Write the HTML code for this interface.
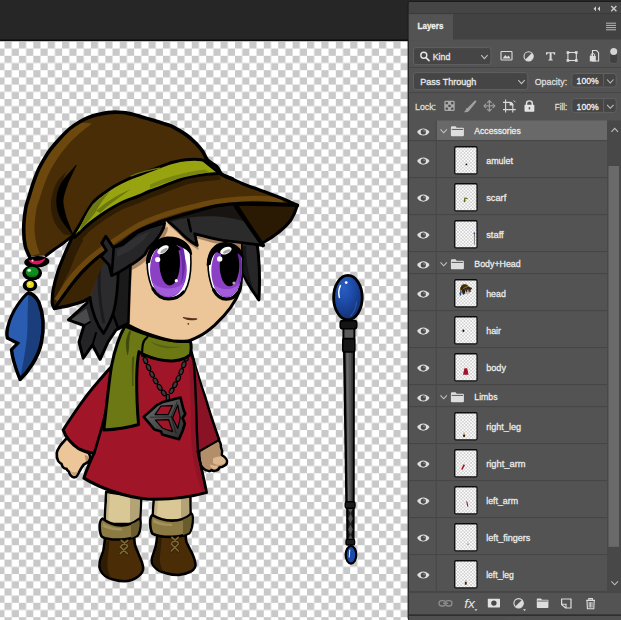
<!DOCTYPE html>
<html><head><meta charset="utf-8"><title>Layers</title>
<style>
html,body{margin:0;padding:0;background:#262626;overflow:hidden}
svg{display:block}
text{font-family:"Liberation Sans",sans-serif;}
</style></head><body>
<svg width="621" height="620" viewBox="0 0 621 620">
<defs>
<pattern id="chk" x="4.5" y="41.4" width="14.405" height="14.395" patternUnits="userSpaceOnUse">
<rect width="14.405" height="14.395" fill="#ffffff"/>
<rect x="0" y="0" width="7.2025" height="7.1975" fill="#c9c9c9"/>
<rect x="7.2025" y="7.1975" width="7.2025" height="7.1975" fill="#c9c9c9"/>
</pattern>
<pattern id="tchk" x="455.4" y="147" width="3.3" height="3.3" patternUnits="userSpaceOnUse">
<rect width="3.3" height="3.3" fill="#ffffff"/>
<rect x="0" y="0" width="1.65" height="1.65" fill="#d0d0d0"/>
<rect x="1.65" y="1.65" width="1.65" height="1.65" fill="#d0d0d0"/>
</pattern>
<g id="eye">
<path d="M-6.2 0 C-3.6 -4.7 3.6 -4.7 6.2 0 C3.6 4.7 -3.6 4.7 -6.2 0Z" fill="#e0e0e0"/>
<circle cx="0" cy="0" r="2.6" fill="#4a4a4a"/>
<circle cx="0.8" cy="-0.8" r="1" fill="#7e7e7e"/>
</g>
<g id="folder">
<path d="M0 1.2 Q0 0 1.2 0 H4.6 L5.8 1.6 H12 Q13 1.6 13 2.6 V9 Q13 10 12 10 H1 Q0 10 0 9Z" fill="#dedede"/>
<rect x="0.8" y="2.7" width="11.4" height="1" fill="#5a5a5a"/>
</g>
<path id="chev" d="M-3.2 -1.8 L0 1.7 L3.2 -1.8" fill="none" stroke="#c4c4c4" stroke-width="1.05"/>
</defs>
<!-- app background -->
<rect width="621" height="620" fill="#262626"/>
<rect x="0" y="39.5" width="410" height="1.8" fill="#0a0a0a"/>
<!-- canvas -->
<rect x="0" y="41.2" width="410" height="580" fill="url(#chk)"/>
<g id="character">
<g stroke-linejoin="round" stroke-linecap="round">
<!-- ===== FEATHER ===== -->
<g id="feather">
<path d="M28.4 292.9 C22 298 12 312 8.5 325 C6.5 331 6.8 335 7.5 338 L18 343.2 L11.6 349.7 C12 356 14 364 20.1 379.4 C28 372 38 358 41.3 343 C44.5 328 43.5 314 38.7 302 C36 297 32 293.5 28.4 292.9Z" fill="#1a3e7c" stroke="#000" stroke-width="3.6"/>
<path d="M28.4 294.5 C22 300 13.5 312 10 325 C8.4 331 8.6 335 9 337 L20.5 342.8 L13.4 350 C14 356 16 364 20.5 376 C24 360 27.5 340 27.5 325 C27.6 312 28 300 28.4 294.5Z" fill="#2a5cb2"/>
</g>
<!-- ===== LEGS / BOOTS ===== -->
<g id="legs" stroke="#000" stroke-width="2.6">
<path d="M106.2 492 L141.2 497 L140 524 L104.6 524Z" fill="#d9c896"/>
<path d="M153.8 499 L190.3 496 L190.6 521 L152.5 521Z" fill="#d9c896"/>
<path d="M130 496 L140.2 497.5 L139 523 L130 523Z" fill="#b3a377" stroke="none"/>
<path d="M181 498 L189.2 497 L189.4 520 L181 520Z" fill="#b3a377" stroke="none"/>
<path d="M107.4 493.5 L110 494 L108 523 L105.8 523Z" fill="#c3b285" stroke="none"/>
<path d="M155 500 L158 499.6 L156.6 520 L153.8 520Z" fill="#c3b285" stroke="none"/>
<!-- boots -->
<path d="M105 538 C104.6 543 104 547 103.3 551 C102 555 100.6 558 99.7 561.7 C99 565 99.4 568 100.6 570.5 C103 575.5 108 578.4 113 579.4 C117 580.6 121 581.2 125.4 581.2 C130 580.8 134.5 579.4 137.8 576.7 C141.6 574 143.6 570.6 143.1 567 C142.6 563 141 559.6 139.6 556.4 C138 552.6 136.4 549 135.2 545.7 C134.6 543 134.3 540.4 134.3 537.8Z" fill="#4a2d06"/>
<path d="M157.3 535 C157 539.5 156.4 543.6 155.5 547.5 C154.4 551 153 554.6 152 558.1 C151.4 561 152 564 153.8 566.1 C157 570 161.6 572.2 166.2 573.2 C170 574.4 174.4 575 178.6 575 C183 574.6 187.6 573.4 191 571.4 C194.4 569.4 195.9 566.6 195.4 563.5 C194.8 559.6 193.4 556 191.9 552.8 C190 549 188 545.6 186.5 542.2 C185.9 539.8 185.7 537.4 185.7 535.1Z" fill="#4a2d06"/>
<!-- cuffs -->
<path d="M102.4 518.6 C100 520 99.4 525 99.7 528 C99.9 531.4 100.4 534.6 101.6 536.4 C104 538.4 112 539.6 120.1 539.5 C127 539.4 133 538 137.4 535.8 C139.6 533 140.6 527 140.5 522.7 C140.4 520.6 140 519.4 139.2 518.8 C134 523 127 525.4 121.9 525.4 C115 525.6 108 523 102.4 518.6Z" fill="#8b7a42"/>
<path d="M152.4 515 C150.4 516.6 150 521 150.2 524.4 C150.4 528 150.9 531.4 152.4 533.6 C156 535.8 164 537 171.5 536.9 C178 536.8 185 535.4 189.4 533 C191.8 530 192.8 522 192.7 517.4 C192.6 515.4 192.2 514.2 191.4 513.6 C186 518.6 178 520.6 172 520.6 C165 520.6 158 518.6 152.4 515Z" fill="#8b7a42"/>
</g>
<path d="M131 524 C134 523 137 521.4 139.3 520 C140 524 139.6 530 137 535 C135 536.4 133 537.4 131 538Z" fill="#6a5c2e"/>
<path d="M183 519.4 C186 518.4 189 516.6 191.4 515 C192 520 191.4 528 189 532.4 C187 533.6 185 534.6 183 535.2Z" fill="#6a5c2e"/>
<path d="M103.4 523 C108 526.4 115 528.4 122 528.2 L122 530.4 C114 530.6 107 529 102.6 526.4Z" fill="#a3935a"/>
<path d="M153.6 519 C159 522.4 166 524 172 523.8 L172 526 C165 526.2 158 524.8 153 522.4Z" fill="#a3935a"/>
<path d="M106.4 541 C105.8 545 105.2 548 104.4 551.4 C103 555.6 101.6 559 101 562 C100.4 565 100.8 568 102 570 C104 574 107.6 576.6 111.4 578 C107.6 572 106.8 565 107.6 558 C108.2 552 109 546 109.4 541Z" fill="#2e1c03"/>
<path d="M158.6 538 C158.2 542 157.6 545 156.8 548 C155.6 552 154.2 555.4 153.4 558.4 C152.8 561 153.2 563.4 154.6 565.4 C156.6 568.4 160 570.4 163.4 571.6 C160 566 159.4 560 160.2 554 C160.8 548 161.4 543 161.6 538Z" fill="#2e1c03"/>
<g stroke="#2e1c03" stroke-width="3" fill="none" stroke-linecap="round">
<path d="M120.2 546.6 L127.4 553.6 M127.4 546.6 L120.2 553.6 M121.4 540.6 L127.6 545.6 M127.6 540.6 L121.4 545.6"/>
<path d="M171.2 544 L178.4 551 M178.4 544 L171.2 551 M172 537.6 L178.2 542.6 M178.2 537.6 L172 542.6"/>
</g>
<g stroke="#7c6838" stroke-width="1.7" fill="none" stroke-linecap="round">
<path d="M120.2 546.6 L127.4 553.6 M127.4 546.6 L120.2 553.6 M121.4 540.6 L127.6 545.6 M127.6 540.6 L121.4 545.6"/>
<path d="M171.2 544 L178.4 551 M178.4 544 L171.2 551 M172 537.6 L178.2 542.6 M178.2 537.6 L172 542.6"/>
</g>
<!-- ===== HANDS ===== -->
<path d="M199.2 450.6 L218.8 440 C220.4 442.4 221.2 444.6 220.8 446.6 C222.2 449.4 222.4 452.4 221.8 455.1 C224.4 456.6 226.4 458.6 227 460.8 C227.2 463 226.4 464.6 225.1 465.3 C223.4 466.6 221.4 467.4 219.5 467.5 C218.8 469.4 217.6 470.4 216.1 470.5 C214.4 471.2 212.6 471 211.4 470 C210.4 471.2 209.2 471.4 208.2 470.9 C206.4 470.6 204.8 469.8 203.7 468.7 C201.4 467 200.2 464.6 199.9 461.9 C199.4 458 199.2 454 199.2 450.6Z" fill="#b38e6b" stroke="#000" stroke-width="2.4"/>
<path d="M213 458.4 C216 457 219 456.4 221.6 456.6 C224 458 225.4 459.6 225.6 461 C225.4 462.8 224.4 463.8 223 464.2 C220 465.4 216 465 213 463Z" fill="#dcb88e"/>
<path d="M209.6 464.6 C212 465.6 215 466 218 465.6 C217.4 467.8 216.4 468.8 215 469 C213 469.2 210.6 468 209.6 464.6Z" fill="#dcb88e"/>
<path d="M68 437 C63.5 441.6 61.4 444 59.7 446.5 C58 449 57 451 56.8 453.2 C56.6 456.4 57 459 58.2 461 C59.4 462.4 60.4 463.4 61.6 463.9 C61.8 465.4 62.2 466.4 63.1 467.3 C64 468.4 65.2 468.8 66.5 468.7 C67 470 67.8 471 68.9 471.6 C69.2 473.2 69.8 474.6 70.8 475.5 C71.8 476.8 73 477.4 74.2 477.4 C75.4 477.2 76.4 476.6 77.1 475.5 C78.4 473.4 79.8 471 81 468.7 C82 467 83 465.6 83.9 464.4 C85.4 463.6 87 462.8 88.2 461.9 C89.6 460.6 90.2 459 90.2 457.1 C90 455.6 89.4 454.2 88.7 453.2 L80 440Z" fill="#ecc698" stroke="#000" stroke-width="2.6"/>
<path d="M84.6 455 C86.6 455.4 88.2 456.4 88.8 457.6 C88.6 459.4 87.6 460.6 86 461.6 C85.6 459.6 85.2 457.4 84.6 455Z" fill="#b9906a"/>
<path d="M70.4 471 C72.4 472.4 75.4 472.6 78 471.4 C77.2 473.4 76.2 475 75.2 475.8 C73.6 476.2 71.8 475 70.4 471Z" fill="#c9a27a"/>
<!-- ===== TUNIC ===== -->
<g id="tunic">
<path d="M112 366 C104 375 92 388 82 402 C75 412 68 422 63.2 430 C65 436 71.5 444.2 79 448.9 C84 451.6 89 453 94 453.2 C90 462 86 471 83.9 478.1 C100 488 125 497 146.8 499 C168 500 190 497 206.5 492.6 C204 480 201 466 197.5 452 L218.8 439.3 C214 425.8 209 411 204.8 396.4 C200 383 196.5 371 193.5 360.3 L191.3 352 L150 345Z" fill="#a11528" stroke="#000" stroke-width="3"/>
<path d="M188 358 C190 376 191 400 191 430 C191.4 455 195.6 475 202 491.2 L205 491.5 C202 478 199 464 196.5 451.5 L196 420 L194 360Z" fill="#8e1326"/>
<path d="M193.5 358 C195 375 196 398 196.9 431.6 L197.6 451 L217.6 439.6 C213 425.8 208 411 203.8 396.4 C199.6 384 196.5 372 193.5 358Z" fill="#8a1225"/>
<path d="M193.5 359.3 C195 375 196 398 196.9 431.6 L198 451.9" fill="none" stroke="#000" stroke-width="2.4"/>
<path d="M109 398 C106 412 101 432 94.3 453" fill="none" stroke="#000" stroke-width="2.6"/>
</g>
<!-- ===== CHAIN + PENDANT ===== -->
<g id="chain" fill="#3b3b3b" stroke="#000" stroke-width="1.1">
<ellipse cx="143.5" cy="354" rx="2.2" ry="2.6"/>
<ellipse cx="145.5" cy="360.5" rx="2" ry="3.2" transform="rotate(-22 145.5 360.5)"/>
<ellipse cx="148.6" cy="367.5" rx="2" ry="3.2" transform="rotate(-24 148.6 367.5)"/>
<ellipse cx="152" cy="374.3" rx="2" ry="3.2" transform="rotate(-27 152 374.3)"/>
<ellipse cx="155.6" cy="381" rx="2" ry="3.2" transform="rotate(-30 155.6 381)"/>
<ellipse cx="159.6" cy="387.3" rx="2" ry="3.2" transform="rotate(-33 159.6 387.3)"/>
<ellipse cx="163.8" cy="393" rx="2" ry="3" transform="rotate(-36 163.8 393)"/>
<ellipse cx="186" cy="358.5" rx="2.2" ry="2.6"/>
<ellipse cx="183.8" cy="364.8" rx="2" ry="3.2" transform="rotate(20 183.8 364.8)"/>
<ellipse cx="181.2" cy="371.6" rx="2" ry="3.2" transform="rotate(22 181.2 371.6)"/>
<ellipse cx="178.3" cy="378.3" rx="2" ry="3.2" transform="rotate(25 178.3 378.3)"/>
<ellipse cx="175" cy="384.8" rx="2" ry="3.2" transform="rotate(28 175 384.8)"/>
<ellipse cx="171.6" cy="390.8" rx="2" ry="3" transform="rotate(31 171.6 390.8)"/>
<rect x="166.2" y="394.5" width="3.2" height="6.5" rx="1.2"/>
</g>
<g id="pendant">
<defs><linearGradient id="pg" x1="0" y1="0" x2="1" y2="1"><stop offset="0" stop-color="#747474"/><stop offset="0.5" stop-color="#4c4c4c"/><stop offset="1" stop-color="#2a2a2a"/></linearGradient></defs>
<path d="M143.7 416.9 L157.3 404.8 L163.1 401.9 L180.5 397.6 L183.4 409.2 L185.3 414 L182.6 417.9 L184.9 423.7 L182.4 431.5 L179 439.2 L162.1 434.4 L161.1 431.5 L154.4 429.5 L149.5 423.7Z" fill="url(#pg)" stroke="#000" stroke-width="2.6"/>
<path d="M161 406 L172.4 405.6 L168.2 414.6 L155 414.6Z" fill="#a11528" stroke="#000" stroke-width="1.2"/>
<path d="M155.4 420.2 L168.6 419.6 L172.6 431.6 L162.6 428.2Z" fill="#a11528" stroke="#000" stroke-width="1.2"/>
<path d="M177.8 405 L180.2 417.9 L177.8 428.4 L172.6 417.9Z" fill="#96132a" stroke="#000" stroke-width="1.2"/>
<path d="M171.3 416.9 L150 417.2 M171.3 416.9 L177.2 402 M171.3 416.9 L176 433" stroke="#000" stroke-width="0.9" fill="none" opacity="0.55"/>
</g>
<!-- ===== SCARF ===== -->
<g id="scarf">
<path d="M125 326 C121 333 115 348 111.5 366 C109 382 106.5 405 103.8 430 C116 429.5 128 427.6 138.6 424.5 C137.4 412 136.6 396 136.7 378 C136.9 366 137.6 358 139 351.6 L142.1 353.8 C147 356 152 358 157.9 359.4 C163 360.6 168 361 172.5 360.9 C178 360.6 182 359.6 185.1 358.2 L190.3 354.8 C191.6 349 191.6 345 190.3 341.2 C170 343 148 336 125 326Z" fill="#6b7814" stroke="#000" stroke-width="3"/>
<path d="M129.6 331 C127.4 336 126.2 340 126.3 344 C126.4 348 126.9 351 127.6 354.5 C128.6 350 128.6 346 128.8 342 C129 338 129.6 334.6 130.6 331.8Z" fill="#3f480b" stroke="#3f480b" stroke-width="0.8"/>
<path d="M133.9 357 C133.2 366 132.8 375 132.9 386 C132.2 376 132 366 132.6 358Z" fill="#4a540d" stroke="#4a540d" stroke-width="0.9"/>
<path d="M147.4 337 C144.6 339.4 143.2 341.6 142.8 344.3 C142.3 347.4 142.1 350.6 142.1 353.8" fill="none" stroke="#000" stroke-width="2.2"/>
<path d="M150 341 C158 345.6 170 347.6 182 346.6 C172 349.6 158 349 150 341Z" fill="#566210"/>
</g>
<!-- ===== HEAD ===== -->
<g id="head">
<!-- back hair left mass -->
<path d="M100 250 C92 262 88 280 87 303 L68.5 319.8 L84 325.5 L79 342 L83.2 358.2 L92.5 345 L100.1 359.3 L108 342 L116 330 L132 322 L135 260Z" fill="#242426" stroke="#000" stroke-width="3"/>
<path d="M71.5 319.4 L86.5 308.5 L90 321 L85 324Z" fill="#4a4a4c"/>
<path d="M92.5 345 L96 333 M84 325.5 L90 322" stroke="#000" stroke-width="2" fill="none"/>
<!-- right back hair lock -->
<path d="M236 236 L256.5 240 C259 255 260.4 275 258.9 300 C252 290 246 282 242.5 272 L238 255Z" fill="#262628" stroke="#000" stroke-width="3"/>
<path d="M240 246 L246 246 C246 260 248 275 253 288 C248 282 244.6 276 242.5 270Z" fill="#161617"/>
<!-- face -->
<path d="M128 240 L150 212 L240 212 C241.5 262 242.5 282 240 290 C236.5 300 230 311 214.7 325.1 C208 331 203 334.5 198.9 336.4 C195 338.5 191 340.5 187.6 340.9 C180 342 172 341 165.1 339.1 C157 337 150 334.5 142.5 331.8 C137 329.6 132 327 126.5 324 C125.5 300 126 270 128 240Z" fill="#ecc698" stroke="#000" stroke-width="3"/>
<!-- mouth -->
<path d="M183.4 317.6 C186 318.4 191 318.8 196.8 318.9 C193 320.2 187 320.3 183.4 317.6Z" fill="#55301a" stroke="#55301a" stroke-width="1.1"/>
<circle cx="188.3" cy="323.8" r="0.9" fill="#55301a"/>
<!-- shadows under hair -->
<clipPath id="fc"><path d="M128 240 L150 212 L240 212 C241.5 262 242.5 282 240 290 C236.5 300 230 311 214.7 325.1 C208 331 203 334.5 198.9 336.4 C195 338.5 191 340.5 187.6 340.9 C180 342 172 341 165.1 339.1 C157 337 150 334.5 142.5 331.8 C137 329.6 132 327 126.5 324 C125.5 300 126 270 128 240Z"/></clipPath>
<g clip-path="url(#fc)" fill="#a98362">
<path d="M160 210 L240 200 L263 245.4 C256 244.6 250 243.6 243.7 242.8 C236 242 230 241.2 223 240.3 C216 239.2 210 238 205 236.4 L194.7 233.8 L197.3 245.4 C190 241.5 184 236.5 179.3 231.2 C175 227.5 172 224.5 169 222.2Z" transform="translate(1.5,4.5)"/>
<path d="M137 232.8 C146 228.5 155 225.4 164.6 223 L163.8 227.4 C160 236 156 241 151 245.4 C147 249 146 252 145 254.3 C140 259 135 263 129.5 265.6 L120 270Z" transform="translate(3.5,4)"/>
<path d="M236 236 L262 240 C262 262 260 285 256.8 300 C250 290 244 282 240.5 274 L236 260Z" transform="translate(-3,0)"/>
<path d="M131 258 C130 275 129 300 128.4 323 L118 328 L108 300Z" transform="translate(1.6,0)"/>
</g>
<!-- left eye -->
<g id="eyeL">
<path d="M147.2 262 C148 250 156 240 167 238.6 C179 238 189 245 190.6 254 C191.6 268 190 282 185 291 C181 296 175 298.4 168 298.2 C160 298 154 293 151 285 C148.6 278 147 270 147.2 262Z" fill="#fff" stroke="#000" stroke-width="1.6"/>
<ellipse cx="168.4" cy="270" rx="18.4" ry="27.6" fill="#8c40c6"/>
<path d="M178 246 C182 256 183.4 270 181 284 C185.4 274 186.6 258 183 247Z" fill="#6a2aa4"/>
<path d="M152.4 282 C156 292 162 296.4 168.4 296.4 C175 296.4 181 292 184.4 282 C178 290.6 159 290.6 152.4 282Z" fill="#a35ddc"/>
<ellipse cx="169.7" cy="262.4" rx="10.3" ry="23" fill="#000"/>
<clipPath id="cl"><ellipse cx="168.4" cy="270" rx="18.4" ry="27.6"/></clipPath>
<g clip-path="url(#cl)"><ellipse cx="170.5" cy="240" rx="19" ry="11.5" fill="#000"/><ellipse cx="170" cy="244" rx="20" ry="12" fill="#3c1568" opacity="0.0"/></g>
<path d="M146.6 263 C147 249 156 238.6 167 237.4 C179 236.6 190 243 191.4 254 C186 246.5 178 243.6 168 244 C158 244.6 151 251 149.4 262Z" fill="#000" stroke="#000" stroke-width="1.6"/>
<path d="M153 289 C157 296 162 299 168.6 299 C175 299 180 296.4 183.6 292" fill="none" stroke="#000" stroke-width="3.2"/>
<ellipse cx="163" cy="249.7" rx="6.4" ry="3.3" fill="#fff" transform="rotate(-34 163 249.7)"/>
<ellipse cx="164" cy="250.6" rx="4.2" ry="1.5" fill="#a8a8a8" transform="rotate(-34 164 250.6)"/>
<circle cx="157.7" cy="259.5" r="2.6" fill="#fff"/>
<circle cx="176.3" cy="280.7" r="1.6" fill="#fff"/>
</g>
<!-- right eye -->
<g id="eyeR">
<path d="M208 264 C208.4 253 214 245.4 223 244.2 C233 243.4 241.4 249 242.4 258 C243 270 241.6 283 238 291.4 C235 296.6 231 298.8 226 298.6 C220 298.4 215 294 212 287 C209.6 280 208 272 208 264Z" fill="#fff" stroke="#000" stroke-width="1.6"/>
<ellipse cx="226.6" cy="271" rx="15.3" ry="26.4" fill="#8c40c6"/>
<path d="M237 252 C240 262 240.6 274 238.6 286 C242 276 243 262 240.6 252Z" fill="#6a2aa4"/>
<path d="M213 283 C216 292.4 221 296.6 226.6 296.6 C232 296.6 236.6 292.4 239.4 283 C234 291 218.6 291 213 283Z" fill="#a35ddc"/>
<ellipse cx="229.5" cy="265.6" rx="9.8" ry="20.6" fill="#000"/>
<clipPath id="cr"><ellipse cx="226.6" cy="271" rx="15.3" ry="26.4"/></clipPath>
<g clip-path="url(#cr)"><ellipse cx="229" cy="245" rx="16" ry="10.5" fill="#000"/></g>
<path d="M207.4 265 C207.8 252 214 244 223 243 C233 242.2 242 247.6 243 258 C239 250.6 232 248.4 224 248.8 C216 249.4 211 255 210 264Z" fill="#000" stroke="#000" stroke-width="1.6"/>
<path d="M213.6 290 C217 296.6 221 299.2 226.4 299.2 C231.6 299.2 235.4 296.8 238 292.4" fill="none" stroke="#000" stroke-width="3.2"/>
<ellipse cx="225.9" cy="250.6" rx="6" ry="3.4" fill="#fff" transform="rotate(-24 225.9 250.6)"/>
<ellipse cx="226.8" cy="251.4" rx="4" ry="1.5" fill="#a8a8a8" transform="rotate(-24 226.8 251.4)"/>
<circle cx="219.7" cy="258.9" r="2.7" fill="#fff"/>
<circle cx="233.9" cy="283" r="1.5" fill="#a9a0b4"/>
</g>
<!-- dark hair behind blade, next to face -->
<path d="M112 262 L131 258 C130 275 129 300 128.4 323 L118 328 L108 300Z" fill="#1a1a1b" stroke="#000" stroke-width="2.4"/>
<!-- blade lock -->
<path d="M92 256 C88.5 270 88 284 89.5 296 C92 312 97 325 103.5 333.4 C108 326 112 318 113.9 310.8 C116.6 300 118 285 118.4 268 L112 250Z" fill="#2b2b2e" stroke="#000" stroke-width="2.8"/>
<path d="M100 262 C98 280 99 300 103.6 322" stroke="#1c1c1e" stroke-width="3" fill="none"/>
<!-- bangs -->
<path d="M160 210 L240 200 L263 245.4 C256 244.6 250 243.6 243.7 242.8 C236 242 230 241.2 223 240.3 C216 239.2 210 238 205 236.4 L194.7 233.8 L197.3 245.4 C190 241.5 184 236.5 179.3 231.2 C175 227.5 172 224.5 169 222.2Z" fill="#2b2b2b" stroke="#000" stroke-width="2.8"/>
<path d="M165 212 L238 203 L246 222 C225 215 195 214 170 222Z" fill="#171412"/>
<path d="M188.3 219.6 L190.9 231.2" stroke="#000" stroke-width="2.6" fill="none"/>
</g>
<!-- ===== HAT ===== -->
<g id="hat">
<path d="M236 204 L297.4 205.3 C296 210 294 215 291 220 C285 228 275 236 261.3 243.8Z" fill="#2b1a03" stroke="#000" stroke-width="3"/>
<path d="M236 206.8 L263 245.4" stroke="#000" stroke-width="4" fill="none"/>
<path d="M73.1 235.3 C71.7 238.4 67.3 247.7 64.7 254.0 C62.1 260.3 59.3 266.8 57.4 272.9 C55.5 278.9 54.0 285.2 53.1 290.3 C52.2 295.4 52.1 300.4 52.3 303.4 C52.5 306.4 54.1 307.6 54.5 308.5 L69.0 305.6 C71.4 304.9 80.0 302.5 83.5 301.2 C87.0 299.9 87.9 301.1 90.0 297.6 C92.1 294.1 93.9 287.3 96.0 280.0 C98.1 272.7 101.3 258.3 102.4 254.0 L120.0 243.9 C122.9 241.8 131.3 234.8 137.4 231.3 C143.5 227.8 149.7 225.6 156.8 223.0 C163.9 220.4 172.8 217.7 180.0 215.5 C187.2 213.3 193.8 211.7 200.0 210.0 C206.2 208.3 210.2 206.7 217.4 205.6 C224.6 204.5 233.7 203.6 243.2 203.3 C252.7 203.0 265.2 203.3 274.2 203.6 C283.2 203.9 293.5 205.0 297.4 205.3 L284.5 199.4 C281.1 198.1 270.8 194.2 263.9 191.6 C257.0 189.0 248.5 186.0 243.2 183.9 C237.9 181.8 235.9 180.6 232.3 179.0 C228.8 177.4 223.6 175.2 221.9 174.5 L219.5 173.2 C218.2 173.3 215.1 173.6 211.6 173.9 C208.1 174.2 203.0 174.6 198.7 175.2 C194.4 175.8 190.1 176.5 185.8 177.7 C181.5 178.9 177.2 180.7 172.9 182.3 C168.6 183.9 163.8 186.0 160.0 187.4 C156.2 188.8 153.8 189.5 150.0 191.0 C146.2 192.5 141.9 194.7 137.4 196.5 C132.9 198.3 127.3 200.0 122.9 202.0 C118.5 204.0 114.8 206.2 111.0 208.5 C107.2 210.8 104.0 212.9 100.3 215.5 C96.6 218.1 93.3 220.3 89.0 224.0 C84.7 227.7 76.9 235.2 74.5 237.5Z" fill="#482d06"/>
<path d="M74.5 238.5 C76.9 236.2 84.7 228.7 89.0 225.0 C93.3 221.3 96.6 219.1 100.3 216.5 C104.0 213.9 107.2 211.8 111.0 209.5 C114.8 207.2 118.5 205.0 122.9 203.0 C127.3 201.0 132.9 199.3 137.4 197.5 C141.9 195.7 146.2 193.5 150.0 192.0 C153.8 190.5 156.2 189.8 160.0 188.4 C163.8 187.0 168.6 184.9 172.9 183.3 C177.2 181.7 181.5 179.9 185.8 178.7 C190.1 177.5 194.4 176.8 198.7 176.2 C203.0 175.6 208.1 175.2 211.6 174.9 C215.1 174.6 218.2 174.3 219.5 174.2 L221.0 179.7 C219.7 179.8 216.6 180.1 213.1 180.4 C209.6 180.7 204.5 181.1 200.2 181.7 C195.9 182.3 191.6 183.0 187.3 184.2 C183.0 185.4 178.7 187.2 174.4 188.8 C170.1 190.4 165.3 192.5 161.5 193.9 C157.7 195.3 155.3 196.0 151.5 197.5 C147.7 199.0 143.4 201.2 138.9 203.0 C134.4 204.8 128.8 206.5 124.4 208.5 C120.0 210.5 116.3 212.8 112.5 215.0 C108.7 217.2 105.5 219.4 101.8 222.0 C98.1 224.6 94.1 227.2 90.5 230.5 C86.9 233.8 81.8 239.7 80.0 241.5Z" fill="#2e1c03"/>
<path d="M75 236.5 L83.5 240 C80.5 245 78 250 76.3 254 C74 259 72 264 70.5 268.5 C68 273.5 65.5 278.4 63.2 283 C61 288 59 293 57.4 297.6 L55 306 C53.4 304 53.4 300 53.8 296 C54.4 290 56 282 58.6 273 C60.5 267 63 260 65.8 254 C68 248 71 242 75 236.5Z" fill="#2e1c03"/>
<path d="M56.6 300.5 C58.4 297.6 63.8 288.3 67.6 283.0 C71.4 277.7 74.8 273.3 79.5 268.5 C84.2 263.7 89.8 258.6 95.5 254.0 C101.2 249.4 107.0 245.7 114.0 241.0 C121.0 236.3 130.3 229.9 137.4 226.0 C144.5 222.1 149.7 220.2 156.8 217.5 C163.9 214.8 172.8 212.1 180.0 210.0 C187.2 207.9 193.8 206.4 200.0 205.0 C206.2 203.6 210.3 202.5 217.0 201.5 C223.7 200.5 232.5 199.5 240.0 199.0 C247.5 198.5 254.8 198.0 262.0 198.3 C269.2 198.6 279.5 200.2 283.0 200.6" fill="none" stroke="#6d480e" stroke-width="5.2" stroke-linecap="butt"/>
<path d="M54.5 308.5 C55.8 306.7 59.0 301.9 62.1 297.6 C65.2 293.4 69.1 287.9 73.0 283.0 C76.9 278.1 80.8 273.3 85.7 268.5 C90.6 263.7 99.6 256.4 102.4 254.0 L104.0 262.0 C102.0 266.7 94.3 284.1 92.0 290.0 C89.7 295.9 90.3 296.3 90.0 297.6 L83.5 301.2 C81.1 301.9 73.8 304.4 69.0 305.6 C64.2 306.8 56.9 308.0 54.5 308.5Z" fill="#3a2404"/>
<path d="M73.1 235.3 C71.7 238.4 67.3 247.7 64.7 254.0 C62.1 260.3 59.3 266.8 57.4 272.9 C55.5 278.9 54.0 285.2 53.1 290.3 C52.2 295.4 52.1 300.4 52.3 303.4 C52.5 306.4 54.1 307.6 54.5 308.5" fill="none" stroke="#000" stroke-width="3.2"/>
<path d="M54.5 308.5 C56.9 308.0 64.2 306.8 69.0 305.6 C73.8 304.4 80.0 302.5 83.5 301.2 C87.0 299.9 88.9 298.2 90.0 297.6" fill="none" stroke="#000" stroke-width="3.2"/>
<path d="M54.5 308.5 C55.8 306.7 59.0 301.9 62.1 297.6 C65.2 293.4 69.1 287.9 73.0 283.0 C76.9 278.1 80.8 273.3 85.7 268.5 C90.6 263.7 96.7 258.1 102.4 254.0 C108.1 249.9 114.2 247.7 120.0 243.9 C125.8 240.1 131.3 234.8 137.4 231.3 C143.5 227.8 149.7 225.6 156.8 223.0 C163.9 220.4 172.8 217.7 180.0 215.5 C187.2 213.3 193.8 211.7 200.0 210.0 C206.2 208.3 210.2 206.7 217.4 205.6 C224.6 204.5 233.7 203.6 243.2 203.3 C252.7 203.0 265.2 203.3 274.2 203.6 C283.2 203.9 293.5 205.0 297.4 205.3" fill="none" stroke="#000" stroke-width="3.2"/>
<path d="M221.9 174.5 C223.6 175.2 228.8 177.4 232.3 179.0 C235.9 180.6 237.9 181.8 243.2 183.9 C248.5 186.0 257.0 189.0 263.9 191.6 C270.8 194.2 278.9 197.1 284.5 199.4 C290.1 201.7 295.2 204.3 297.4 205.3" fill="none" stroke="#000" stroke-width="3.2"/>
<path d="M29.5 256.5 C28.8 254.8 26.2 250.8 25.2 246.0 C24.2 241.2 23.6 233.8 23.7 227.5 C23.8 221.2 24.9 212.9 25.7 208.0 C26.5 203.1 27.6 201.3 28.6 198.0 C29.6 194.7 30.5 191.6 31.5 188.4 C32.5 185.2 33.6 181.9 34.8 178.7 C36.0 175.5 37.2 172.2 38.7 169.0 C40.2 165.8 42.1 162.6 44.0 159.4 C45.9 156.2 47.7 153.1 50.3 149.7 C52.9 146.3 56.2 142.4 59.4 139.0 C62.6 135.6 66.0 131.8 69.3 129.0 C72.6 126.2 75.8 124.1 79.0 122.2 C82.2 120.3 85.4 118.7 88.6 117.4 C91.8 116.1 95.1 115.3 98.3 114.5 C101.5 113.7 104.8 113.0 108.0 112.6 C111.2 112.2 114.4 112.1 117.6 112.2 C120.8 112.3 124.1 112.5 127.3 113.1 C130.5 113.6 133.8 114.6 137.0 115.5 C140.2 116.4 143.4 117.4 146.6 118.4 C149.8 119.4 153.1 120.3 156.3 121.3 C159.5 122.3 163.2 123.3 166.0 124.2 C168.8 125.1 169.6 125.1 172.9 126.8 C176.2 128.5 181.9 131.7 185.8 134.5 C189.7 137.3 193.3 140.7 196.1 143.5 C198.9 146.3 200.7 148.5 202.6 151.3 C204.5 154.1 205.3 157.7 207.7 160.3 C210.1 162.9 214.4 164.4 216.8 166.8 C219.2 169.2 221.1 173.2 221.9 174.5 L219.5 173.2 C218.2 173.3 215.1 173.6 211.6 173.9 C208.1 174.2 203.0 174.6 198.7 175.2 C194.4 175.8 190.1 176.5 185.8 177.7 C181.5 178.9 177.2 180.7 172.9 182.3 C168.6 183.9 163.8 186.0 160.0 187.4 C156.2 188.8 153.8 189.5 150.0 191.0 C146.2 192.5 141.9 194.7 137.4 196.5 C132.9 198.3 127.3 200.0 122.9 202.0 C118.5 204.0 114.8 206.2 111.0 208.5 C107.2 210.8 104.0 212.9 100.3 215.5 C96.6 218.1 93.3 220.3 89.0 224.0 C84.7 227.7 76.9 235.2 74.5 237.5 L73.1 235.3 C71.5 236.6 66.6 240.6 63.4 243.0 C60.2 245.4 56.7 247.7 53.8 249.8 C50.9 251.9 47.3 254.6 46.0 255.6Z" fill="#482d06"/>
<path d="M29.5 256.5 C28.8 254.8 26.2 250.8 25.2 246.0 C24.2 241.2 23.6 233.8 23.7 227.5 C23.8 221.2 24.9 212.9 25.7 208.0 C26.5 203.1 27.6 201.3 28.6 198.0 C29.6 194.7 30.5 191.6 31.5 188.4 C32.5 185.2 33.6 181.9 34.8 178.7 C36.0 175.5 37.2 172.2 38.7 169.0 C40.2 165.8 42.1 162.6 44.0 159.4 C45.9 156.2 47.7 153.1 50.3 149.7 C52.9 146.3 56.2 142.4 59.4 139.0 C62.6 135.6 66.0 131.8 69.3 129.0 C72.6 126.2 77.4 123.3 79.0 122.2 L92.0 123.5 C90.0 125.1 83.5 130.0 80.0 133.0 C76.5 136.0 74.0 138.3 71.0 141.5 C68.0 144.7 64.6 148.7 62.0 152.0 C59.4 155.3 57.5 158.3 55.5 161.5 C53.5 164.7 51.6 167.9 50.0 171.0 C48.4 174.1 47.2 176.9 46.0 180.0 C44.8 183.1 43.6 186.3 42.5 189.5 C41.4 192.7 40.5 195.8 39.5 199.0 C38.5 202.2 37.3 204.2 36.5 209.0 C35.7 213.8 34.5 222.2 34.5 228.0 C34.5 233.8 35.6 239.8 36.5 244.0 C37.4 248.2 39.4 251.9 40.0 253.5Z" fill="#6d480e"/>
<path d="M66.0 172.0 C64.3 174.0 58.5 178.7 56.0 184.0 C53.5 189.3 51.1 197.7 50.9 204.0 C50.6 210.3 52.3 216.9 54.5 222.0 C56.7 227.1 62.4 232.4 64.0 234.5 L73.1 235.3 C71.0 232.4 63.2 223.6 60.5 217.8 C57.8 212.0 56.5 206.2 56.7 200.4 C56.9 194.6 60.7 185.9 61.5 183.0Z" fill="#2e1c03"/>
<path d="M76.0 165.5 C73.6 168.4 64.7 177.2 61.5 183.0 C58.3 188.8 56.9 194.6 56.7 200.4 C56.5 206.2 57.8 212.0 60.5 217.8 C63.2 223.6 71.0 232.4 73.1 235.3 L66.2 217.8 C65.7 214.9 62.7 206.2 63.0 200.4 C63.3 194.6 67.0 185.9 67.8 183.0Z" fill="#000" stroke="#000" stroke-width="0.8"/>
<path d="M29.5 256.5 C28.8 254.8 26.2 250.8 25.2 246.0 C24.2 241.2 23.6 233.8 23.7 227.5 C23.8 221.2 24.9 212.9 25.7 208.0 C26.5 203.1 27.6 201.3 28.6 198.0 C29.6 194.7 30.5 191.6 31.5 188.4 C32.5 185.2 33.6 181.9 34.8 178.7 C36.0 175.5 37.2 172.2 38.7 169.0 C40.2 165.8 42.1 162.6 44.0 159.4 C45.9 156.2 47.7 153.1 50.3 149.7 C52.9 146.3 56.2 142.4 59.4 139.0 C62.6 135.6 66.0 131.8 69.3 129.0 C72.6 126.2 75.8 124.1 79.0 122.2 C82.2 120.3 85.4 118.7 88.6 117.4 C91.8 116.1 95.1 115.3 98.3 114.5 C101.5 113.7 104.8 113.0 108.0 112.6 C111.2 112.2 114.4 112.1 117.6 112.2 C120.8 112.3 124.1 112.5 127.3 113.1 C130.5 113.6 133.8 114.6 137.0 115.5 C140.2 116.4 143.4 117.4 146.6 118.4 C149.8 119.4 153.1 120.3 156.3 121.3 C159.5 122.3 163.2 123.3 166.0 124.2 C168.8 125.1 169.6 125.1 172.9 126.8 C176.2 128.5 181.9 131.7 185.8 134.5 C189.7 137.3 193.3 140.7 196.1 143.5 C198.9 146.3 200.7 148.5 202.6 151.3 C204.5 154.1 205.3 157.7 207.7 160.3 C210.1 162.9 214.4 164.4 216.8 166.8 C219.2 169.2 219.3 172.5 221.9 174.5 C224.5 176.5 230.6 178.2 232.3 179.0" fill="none" stroke="#000" stroke-width="3.6"/>
<path d="M73.1 235.3 C71.5 236.6 66.6 240.6 63.4 243.0 C60.2 245.4 56.7 247.7 53.8 249.8 C50.9 251.9 47.3 254.6 46.0 255.6" fill="none" stroke="#000" stroke-width="3"/>
<path d="M73.1 235.3 C74.1 233.7 76.7 229.5 79.0 225.6 C81.3 221.7 84.0 216.2 86.7 212.0 C89.4 207.8 92.0 203.6 95.0 200.4 C98.0 197.2 101.5 195.0 104.8 192.6 C108.1 190.2 111.2 188.0 115.0 185.8 C118.8 183.6 123.2 181.4 127.4 179.5 C131.6 177.6 136.2 176.0 140.0 174.5 C143.8 173.0 146.7 171.8 150.0 170.5 C153.3 169.2 156.2 168.2 160.0 166.8 C163.8 165.4 168.6 163.5 172.9 162.3 C177.2 161.1 181.1 160.1 185.8 159.7 C190.5 159.3 197.9 159.2 201.3 159.7 C204.7 160.1 205.2 161.9 206.0 162.4 L219.5 173.2 C218.2 173.3 215.1 173.6 211.6 173.9 C208.1 174.2 203.0 174.6 198.7 175.2 C194.4 175.8 190.1 176.5 185.8 177.7 C181.5 178.9 177.2 180.7 172.9 182.3 C168.6 183.9 163.8 186.0 160.0 187.4 C156.2 188.8 153.8 189.5 150.0 191.0 C146.2 192.5 141.9 194.7 137.4 196.5 C132.9 198.3 127.3 200.0 122.9 202.0 C118.5 204.0 114.8 206.2 111.0 208.5 C107.2 210.8 104.0 212.9 100.3 215.5 C96.6 218.1 93.3 220.3 89.0 224.0 C84.7 227.7 76.9 235.2 74.5 237.5Z" fill="#98a40f" stroke="#000" stroke-width="3"/>
<path d="M79 232 C82 222 87 212 93 204 C98 199 104 195 110 191.5 C104 198 99 205 95 213 C90 219 84 226 79 232Z" fill="#6d7810"/>
<path d="M96 211 C106 202 118 194.5 131 189 C120 197 108 205 100 213Z" fill="#6d7810"/>
<path d="M150 188.6 C165 182 185 175.6 210 172.4 L205 169.4 C185 171.6 165 177.4 150 184.6Z" fill="#7b8710"/>
<path d="M131 176 C140 172.5 150 169.6 160 168.2" stroke="#6d7810" stroke-width="1.2" fill="none"/>
</g>
<!-- ===== tuft + left hair over brim ===== -->
<g id="tuft">
<path d="M105.8 236.3 L113.2 247.4 L122.7 244.6 L137 232.8 C146 228.5 155 225.4 164.6 223 L163.8 227.4 C160 236 156 241 151 245.4 C147 249 146 252 145 254.3 C140 259 135 263 129.5 265.6 C123 270 117 273.6 111.6 275.6 L109 265 L101 256.4 L106.4 250.4 L101.8 243Z" fill="#262628" stroke="#000" stroke-width="2.8"/>
<path d="M113.7 248.2 L111.8 274" stroke="#000" stroke-width="2.6" fill="none"/>
<path d="M117 250.5 L134 238.5 L150 231 L144 240 L131 250 L117 257Z" fill="#303033"/>
</g>
<!-- ===== BEADS ===== -->
<g id="beads">
<ellipse cx="36.8" cy="261.9" rx="12.6" ry="5.9" fill="#000" transform="rotate(-3 36.8 261.9)"/>
<ellipse cx="32.2" cy="273" rx="9.9" ry="7.5" fill="#000"/>
<ellipse cx="30" cy="285.6" rx="7.3" ry="6" fill="#000"/>
<path d="M28.4 259.4 C31 260.6 34 261 37 260.8 C40.5 260.4 43.4 259.4 45.4 258 C44.6 261.4 41 264.4 36.4 264.4 C32 264.2 29.2 262.4 28.4 259.4Z" fill="#e2125c"/>
<ellipse cx="32.2" cy="272" rx="6.5" ry="5.2" fill="#0f8c1e"/>
<path d="M27 274 C29 277.4 35 278 38 274.6 C36 276 30 276.2 27 274Z" fill="#0a6a14"/>
<ellipse cx="30.2" cy="284.6" rx="3.7" ry="3.5" fill="#e6d822"/>
<circle cx="32.5" cy="260.6" r="1.1" fill="#ffd0e0"/>
<ellipse cx="29.2" cy="270.4" rx="1.9" ry="1.4" fill="#c8f5c0"/>
<circle cx="29.4" cy="283.6" r="1.1" fill="#fffbc0"/>
</g>
<!-- ===== STAFF ===== -->
<g id="staff">
<defs><radialGradient id="og" cx="0.36" cy="0.28" r="0.8"><stop offset="0" stop-color="#2a5ec4"/><stop offset="0.45" stop-color="#1c49a4"/><stop offset="1" stop-color="#122c68"/></radialGradient></defs>
<path d="M344.2 350 L353.7 350 L353.5 503 L346.5 503Z" fill="#555" stroke="#000" stroke-width="2.4"/>
<path d="M346.6 352 L348.6 352 L349.4 502 L348 502Z" fill="#6a6a6a"/>
<path d="M351 351 L352.6 351 L352.4 502 L350.9 502Z" fill="#404040"/>
<path d="M347.2 508 L353.6 508 L353.4 540 L347.4 540Z" fill="#222" stroke="#000" stroke-width="2.2"/>
<path d="M348 508.6 L353 508.6 L350.5 513Z M350.5 513.6 L352.8 518.5 L350.5 523.4 L348.2 518.5Z M350.5 524.6 L352.8 529.5 L350.5 534.4 L348.2 529.5Z M350.5 535 L353 539.4 L348 539.4Z" fill="#585858"/>
<rect x="345.2" y="501.8" width="9.8" height="6.4" rx="1.6" fill="#1c1c1c" stroke="#000" stroke-width="1.4"/>
<rect x="346" y="539.4" width="8.6" height="5.6" rx="1.6" fill="#1c1c1c" stroke="#000" stroke-width="1.4"/>
<ellipse cx="351" cy="554.8" rx="5.3" ry="8.8" fill="#1b4aa8" stroke="#000" stroke-width="2.2"/>
<path d="M349.8 550 L349.2 557" stroke="#dfe8ff" stroke-width="1" fill="none"/>
<!-- collar -->
<rect x="343.4" y="328" width="11" height="11" fill="#5b5b5b" stroke="#000" stroke-width="2"/>
<rect x="342.8" y="338.6" width="12" height="13.4" rx="1.5" fill="#161616" stroke="#000" stroke-width="1.6"/>
<rect x="340.2" y="320.6" width="16.6" height="8.2" rx="2.6" fill="#141414" stroke="#000" stroke-width="1.6"/>
<!-- orb -->
<ellipse cx="347.9" cy="297.6" rx="14.3" ry="22.2" fill="url(#og)" stroke="#000" stroke-width="2.8"/>
<path d="M340.4 285.6 C338.6 289.5 338.4 294 339.4 297.4" stroke="#fff" stroke-width="1.5" fill="none"/>
<path d="M356.6 302 C356 308 353.6 313 350.6 316" stroke="#3a62b8" stroke-width="1.2" fill="none" opacity="0.7"/>
<circle cx="346.2" cy="282.6" r="1.4" fill="#fff"/>
</g>
</g>

</g>
<!-- panel -->
<g id="panel">
<rect x="407.6" y="1" width="214" height="620" rx="3.5" fill="#1a1a1a"/>
<rect x="408.8" y="2" width="213" height="618" rx="3" fill="#535353"/>
<rect x="408.8" y="2" width="213" height="12" fill="#454545"/>
<rect x="408.8" y="14" width="213" height="25.5" fill="#424242"/>
<rect x="408.8" y="14" width="44.2" height="26.5" fill="#535353"/>
<rect x="408.8" y="13.2" width="213" height="0.9" fill="#3a3a3a"/>
<text x="417.6" y="29.4" font-size="9.2" fill="#f2f2f2" stroke="#f2f2f2" stroke-width="0.28" textLength="25.8" lengthAdjust="spacingAndGlyphs" font-weight="bold">Layers</text>
<!-- collapse / close -->
<path d="M596 6.2 L593.6 8.7 L596 11.2Z M600 6.2 L597.6 8.7 L600 11.2Z" fill="#d0d0d0"/>
<path d="M611.2 6 L616.4 11.2 M616.4 6 L611.2 11.2" stroke="#c8c8c8" stroke-width="1.4"/>
<!-- hamburger -->
<path d="M606 23.2 H616 M606 25.4 H616 M606 27.6 H616 M606 29.8 H616" stroke="#b8b8b8" stroke-width="1"/>
<!-- Kind row -->
<rect x="413.5" y="47.6" width="77.5" height="17" rx="2.5" fill="#454545" stroke="#616161" stroke-width="1"/>
<circle cx="423.8" cy="55.2" r="3" fill="none" stroke="#e4e4e4" stroke-width="1.4"/>
<path d="M426 57.6 L429 60.6" stroke="#e4e4e4" stroke-width="1.7" stroke-linecap="round"/>
<text x="432.7" y="59.6" font-size="9.2" fill="#ececec" stroke="#ececec" stroke-width="0.28" textLength="17.7" lengthAdjust="spacingAndGlyphs" >Kind</text>
<use href="#chev" x="484.4" y="57"/>
<rect x="408.8" y="67" width="213" height="1" fill="#464646"/>
<rect x="408.8" y="92.2" width="213" height="1" fill="#464646"/>
<!-- filter icons -->
<g fill="none" stroke="#dcdcdc" stroke-width="1.1">
<rect x="501" y="51.5" width="11" height="8.5" rx="0.8"/>
<rect x="567.9" y="52.5" width="8.4" height="8"/>
</g>
<path d="M502.6 58.6 L505.3 55 L507 57 L508.6 55.6 L510.6 58.6Z" fill="#dcdcdc"/>
<circle cx="528.6" cy="56.3" r="4.6" fill="none" stroke="#dcdcdc" stroke-width="1.1"/>
<path d="M525.35 59.55 A4.6 4.6 0 0 0 531.85 53.05Z" fill="#dcdcdc"/>
<path d="M546 52.2 H555.2 V54.8 H554.3 Q554.1 53.3 552.7 53.3 H551.6 V59 Q551.6 59.7 552.8 59.7 V60.6 H548.4 V59.7 Q549.6 59.7 549.6 59 V53.3 H548.5 Q547.1 53.3 546.9 54.8 H546Z" fill="#dcdcdc"/>
<g fill="#dcdcdc"><rect x="566.6" y="51.2" width="2.6" height="2.6"/><rect x="575" y="51.2" width="2.6" height="2.6"/><rect x="566.6" y="59.2" width="2.6" height="2.6"/><rect x="575" y="59.2" width="2.6" height="2.6"/></g>
<path d="M592.5 50.5 H596.6 L598.6 52.6 V61 H592.5Z" fill="none" stroke="#dcdcdc" stroke-width="1.1"/>
<rect x="589.8" y="56" width="6" height="5.4" fill="#dcdcdc"/>
<path d="M591 56 V54.4 Q592.8 52.4 594.6 54.4 V56" fill="none" stroke="#dcdcdc" stroke-width="1"/>
<rect x="609.6" y="47.6" width="8.2" height="16" rx="4.1" fill="#404040" stroke="#5e5e5e" stroke-width="0.8"/>
<circle cx="613.7" cy="51.6" r="3.5" fill="#d4d4d4"/>
<!-- blend row -->
<rect x="413.5" y="72.6" width="114.3" height="17" rx="2.5" fill="#454545" stroke="#616161" stroke-width="1"/>
<text x="420.2" y="84.8" font-size="9.2" fill="#ececec" stroke="#ececec" stroke-width="0.28" textLength="56.2" lengthAdjust="spacingAndGlyphs" >Pass Through</text>
<use href="#chev" x="521.5" y="82"/>
<text x="534.7" y="84.8" font-size="9.2" fill="#dedede" stroke="#dedede" stroke-width="0.28" textLength="32.5" lengthAdjust="spacingAndGlyphs" >Opacity:</text>
<rect x="571.8" y="73.5" width="44.4" height="13.6" rx="2.5" fill="#454545" stroke="#616161" stroke-width="1"/>
<path d="M603.6 74 V86.6" stroke="#616161" stroke-width="1"/>
<text x="576.6" y="84.3" font-size="9.2" fill="#f4f4f4" stroke="#f4f4f4" stroke-width="0.28" textLength="22" lengthAdjust="spacingAndGlyphs" >100%</text>
<use href="#chev" x="610.3" y="81.3"/>
<!-- lock row -->
<text x="415" y="109.5" font-size="9.2" fill="#dedede" stroke="#dedede" stroke-width="0.28" textLength="21" lengthAdjust="spacingAndGlyphs" >Lock:</text>
<text x="554.8" y="109.5" font-size="9.2" fill="#dedede" stroke="#dedede" stroke-width="0.28" textLength="12.4" lengthAdjust="spacingAndGlyphs" >Fill:</text>
<rect x="571.8" y="98.6" width="44.4" height="13.8" rx="2.5" fill="#454545" stroke="#616161" stroke-width="1"/>
<path d="M603.6 99 V112" stroke="#616161" stroke-width="1"/>
<text x="576.6" y="109.5" font-size="9.2" fill="#f4f4f4" stroke="#f4f4f4" stroke-width="0.28" textLength="22" lengthAdjust="spacingAndGlyphs" >100%</text>
<use href="#chev" x="610.3" y="106.6"/>
<!-- lock transparency -->
<rect x="444.3" y="100.8" width="10.4" height="10.2" rx="1.3" fill="#a9a9a9"/>
<g fill="#4c4c4c">
<rect x="445.6" y="102" width="2.3" height="2.3" rx="0.6"/><rect x="451.1" y="102" width="2.3" height="2.3" rx="0.6"/>
<rect x="448.35" y="104.75" width="2.3" height="2.3" rx="0.6"/>
<rect x="445.6" y="107.5" width="2.3" height="2.3" rx="0.6"/><rect x="451.1" y="107.5" width="2.3" height="2.3" rx="0.6"/>
</g>
<!-- brush -->
<path d="M475.2 100.2 L468 107.4 L470.2 109.4 L476.6 101.6Z" fill="#a2a2a2"/>
<path d="M468.4 107.4 Q466 107.6 465.6 110 Q465.2 111.6 463.8 112 Q468.6 113 470.2 109.2Z" fill="#a2a2a2"/>
<!-- move -->
<g fill="none" stroke="#9c9c9c" stroke-width="1.2">
<path d="M489.4 100.8 V111 M484.2 105.9 H494.6"/>
<path d="M487.2 102.8 L489.4 100.6 L491.6 102.8 M487.2 109 L489.4 111.2 L491.6 109 M486.2 103.7 L484 105.9 L486.2 108.1 M492.6 103.7 L494.8 105.9 L492.6 108.1"/>
</g>
<!-- artboard/crop -->
<g fill="none" stroke="#dadada" stroke-width="1.1">
<path d="M505.6 99.6 V112.4 M512.8 104 V112.4 M503 102.4 H510 M503 109.6 H515.8"/>
<path d="M509.6 102.4 Q512.6 102.6 512.8 105.2"/>
</g>
<path d="M509.6 102 H510.4 Q513 102.4 513.3 105.6 L509.6 105.6Z" fill="#dadada"/>
<path d="M513.6 100.4 L515.4 102.2" stroke="#dadada" stroke-width="0.9"/>
<!-- lock all -->
<rect x="524.5" y="104.8" width="9.8" height="6.9" rx="0.8" fill="#e4e4e4"/>
<path d="M526.5 105 V103.4 Q526.5 100.9 529.4 100.9 Q532.3 100.9 532.3 103.4 V105" fill="none" stroke="#e4e4e4" stroke-width="1.4"/>
<rect x="528.7" y="107.2" width="1.5" height="2.2" fill="#4c4c4c"/>


<rect x="607" y="120.5" width="14" height="472" fill="#484848"/>
<rect x="608.5" y="166" width="10.5" height="380.8" fill="#6a6a6a"/>
<path d="M611.4 131.8 L614.7 128.4 L618 131.8" fill="none" stroke="#bdbdbd" stroke-width="1.1"/>
<path d="M611.4 581.4 L614.7 584.8 L618 581.4" fill="none" stroke="#bdbdbd" stroke-width="1.1"/>
<rect x="436.5" y="120.5" width="170.5" height="19.6" fill="#696969"/>
<use href="#eye" x="423.3" y="131.9"/>
<use href="#chev" x="443.7" y="131.1"/>
<use href="#folder" x="450.9" y="126.2"/>
<text x="474.3" y="134.1" font-size="9.2" fill="#ececec" stroke="#ececec" stroke-width="0.28" textLength="46.4" lengthAdjust="spacingAndGlyphs" >Accessories</text>
<rect x="408.8" y="140.1" width="198.2" height="1" fill="#454545"/>
<use href="#eye" x="423.3" y="161.1"/>
<rect x="454.1" y="146.1" width="23.5" height="28.4" rx="1.8" fill="#0c0c0c"/>
<rect x="455.4" y="147.4" width="21" height="25.9" rx="0.6" fill="url(#tchk)"/>
<circle cx="466.4" cy="164.4" r="0.9" fill="#111"/>
<text x="486.2" y="163.5" font-size="9.2" fill="#ececec" stroke="#ececec" stroke-width="0.28" textLength="26.8" lengthAdjust="spacingAndGlyphs" >amulet</text>
<rect x="408.8" y="177.1" width="198.2" height="1" fill="#454545"/>
<use href="#eye" x="423.3" y="198.1"/>
<rect x="454.1" y="183.1" width="23.5" height="28.4" rx="1.8" fill="#0c0c0c"/>
<rect x="455.4" y="184.4" width="21" height="25.9" rx="0.6" fill="url(#tchk)"/>
<g transform="translate(459.35,183.40) scale(0.043)"><use href="#scarf"/></g>
<text x="486.2" y="200.5" font-size="9.2" fill="#ececec" stroke="#ececec" stroke-width="0.28" textLength="20.1" lengthAdjust="spacingAndGlyphs" >scarf</text>
<rect x="408.8" y="214.1" width="198.2" height="1" fill="#454545"/>
<use href="#eye" x="423.3" y="235.1"/>
<rect x="454.1" y="220.1" width="23.5" height="28.4" rx="1.8" fill="#0c0c0c"/>
<rect x="455.4" y="221.4" width="21" height="25.9" rx="0.6" fill="url(#tchk)"/>
<g transform="translate(459.35,220.40) scale(0.043)"><use href="#staff"/></g>
<text x="486.2" y="237.5" font-size="9.2" fill="#ececec" stroke="#ececec" stroke-width="0.28" textLength="17.5" lengthAdjust="spacingAndGlyphs" >staff</text>
<rect x="408.8" y="251.1" width="198.2" height="1" fill="#454545"/>
<use href="#eye" x="423.3" y="264.9"/>
<use href="#chev" x="443.7" y="264.1"/>
<use href="#folder" x="450.9" y="259.2"/>
<text x="474.3" y="267.1" font-size="9.2" fill="#ececec" stroke="#ececec" stroke-width="0.28" textLength="46.4" lengthAdjust="spacingAndGlyphs" >Body+Head</text>
<rect x="408.8" y="273.1" width="198.2" height="1" fill="#454545"/>
<use href="#eye" x="423.3" y="294.1"/>
<rect x="454.1" y="279.1" width="23.5" height="28.4" rx="1.8" fill="#0c0c0c"/>
<rect x="455.4" y="280.4" width="21" height="25.9" rx="0.6" fill="url(#tchk)"/>
<g transform="translate(459.35,279.40) scale(0.043)"><use href="#feather"/><use href="#head"/><use href="#hat"/><use href="#tuft"/><use href="#beads"/></g>
<text x="486.2" y="296.5" font-size="9.2" fill="#ececec" stroke="#ececec" stroke-width="0.28" textLength="19.6" lengthAdjust="spacingAndGlyphs" >head</text>
<rect x="408.8" y="310.1" width="198.2" height="1" fill="#454545"/>
<use href="#eye" x="423.3" y="331.1"/>
<rect x="454.1" y="316.1" width="23.5" height="28.4" rx="1.8" fill="#0c0c0c"/>
<rect x="455.4" y="317.4" width="21" height="25.9" rx="0.6" fill="url(#tchk)"/>
<ellipse cx="463.4" cy="330.7" rx="1" ry="1.2" fill="#111"/>
<text x="486.2" y="333.5" font-size="9.2" fill="#ececec" stroke="#ececec" stroke-width="0.28" textLength="14.9" lengthAdjust="spacingAndGlyphs" >hair</text>
<rect x="408.8" y="347.1" width="198.2" height="1" fill="#454545"/>
<use href="#eye" x="423.3" y="368.1"/>
<rect x="454.1" y="353.1" width="23.5" height="28.4" rx="1.8" fill="#0c0c0c"/>
<rect x="455.4" y="354.4" width="21" height="25.9" rx="0.6" fill="url(#tchk)"/>
<path d="M464.4 368.3 H467.2 L468.5 374.7 H463Z" fill="#a11528"/>
<text x="486.2" y="370.5" font-size="9.2" fill="#ececec" stroke="#ececec" stroke-width="0.28" textLength="19.8" lengthAdjust="spacingAndGlyphs" >body</text>
<rect x="408.8" y="384.1" width="198.2" height="1" fill="#454545"/>
<use href="#eye" x="423.3" y="397.9"/>
<use href="#chev" x="443.7" y="397.1"/>
<use href="#folder" x="450.9" y="392.2"/>
<text x="474.3" y="400.1" font-size="9.2" fill="#ececec" stroke="#ececec" stroke-width="0.28" textLength="23.2" lengthAdjust="spacingAndGlyphs" >Limbs</text>
<rect x="408.8" y="406.1" width="198.2" height="1" fill="#454545"/>
<use href="#eye" x="423.3" y="427.1"/>
<rect x="454.1" y="412.1" width="23.5" height="28.4" rx="1.8" fill="#0c0c0c"/>
<rect x="455.4" y="413.4" width="21" height="25.9" rx="0.6" fill="url(#tchk)"/>
<rect x="463.3" y="432.5" width="1.6" height="2.2" fill="#c8b684"/><rect x="463.1" y="434.5" width="2" height="2.6" rx="0.6" fill="#3e2605"/>
<text x="486.2" y="429.5" font-size="9.2" fill="#ececec" stroke="#ececec" stroke-width="0.28" textLength="34.8" lengthAdjust="spacingAndGlyphs" >right_leg</text>
<rect x="408.8" y="443.1" width="198.2" height="1" fill="#454545"/>
<use href="#eye" x="423.3" y="464.1"/>
<rect x="454.1" y="449.1" width="23.5" height="28.4" rx="1.8" fill="#0c0c0c"/>
<rect x="455.4" y="450.4" width="21" height="25.9" rx="0.6" fill="url(#tchk)"/>
<path d="M463.6 464.3 L465 465.1 L462.4 470.1 L461.2 469.1Z" fill="#a11528"/>
<text x="486.2" y="466.5" font-size="9.2" fill="#ececec" stroke="#ececec" stroke-width="0.28" textLength="39.3" lengthAdjust="spacingAndGlyphs" >right_arm</text>
<rect x="408.8" y="480.1" width="198.2" height="1" fill="#454545"/>
<use href="#eye" x="423.3" y="501.1"/>
<rect x="454.1" y="486.1" width="23.5" height="28.4" rx="1.8" fill="#0c0c0c"/>
<rect x="455.4" y="487.4" width="21" height="25.9" rx="0.6" fill="url(#tchk)"/>
<path d="M466.2 501.5 L467.2 501.3 L468.4 506.5 L467.4 506.7Z" fill="#9a1428"/>
<text x="486.2" y="503.5" font-size="9.2" fill="#ececec" stroke="#ececec" stroke-width="0.28" textLength="31.9" lengthAdjust="spacingAndGlyphs" >left_arm</text>
<rect x="408.8" y="517.1" width="198.2" height="1" fill="#454545"/>
<use href="#eye" x="423.3" y="538.1"/>
<rect x="454.1" y="523.1" width="23.5" height="28.4" rx="1.8" fill="#0c0c0c"/>
<rect x="455.4" y="524.4" width="21" height="25.9" rx="0.6" fill="url(#tchk)"/>
<circle cx="468" cy="544.1" r="0.7" fill="#5a4630"/>
<text x="486.2" y="540.5" font-size="9.2" fill="#ececec" stroke="#ececec" stroke-width="0.28" textLength="44.2" lengthAdjust="spacingAndGlyphs" >left_fingers</text>
<rect x="408.8" y="554.1" width="198.2" height="1" fill="#454545"/>
<use href="#eye" x="423.3" y="575.1"/>
<rect x="454.1" y="560.1" width="23.5" height="28.4" rx="1.8" fill="#0c0c0c"/>
<rect x="455.4" y="561.4" width="21" height="25.9" rx="0.6" fill="url(#tchk)"/>
<rect x="465" y="580.1" width="1.6" height="2.2" fill="#c8b684"/><rect x="464.8" y="582.1" width="2" height="2.6" rx="0.6" fill="#3e2605"/>
<text x="486.2" y="577.5" font-size="9.2" fill="#ececec" stroke="#ececec" stroke-width="0.28" textLength="27.7" lengthAdjust="spacingAndGlyphs" >left_leg</text>
<rect x="408.8" y="591.1" width="198.2" height="1" fill="#454545"/>
<rect x="435.7" y="120.5" width="1" height="471.5" fill="#464646"/>
<rect x="408.8" y="592" width="213" height="22" fill="#535353"/>
<rect x="408.8" y="591.8" width="213" height="1" fill="#454545"/>
<rect x="408.8" y="614.3" width="213" height="1.7" fill="#2f2f2f"/>
<rect x="408.8" y="616" width="213" height="4" fill="#505050"/>
<!-- link -->
<g fill="none" stroke="#8c8c8c" stroke-width="1.3">
<rect x="439" y="600.6" width="6.6" height="5.4" rx="2.7"/>
<rect x="445.4" y="600.6" width="6.6" height="5.4" rx="2.7"/>
<path d="M443 603.3 H448"/>
</g>
<!-- fx -->
<text x="464.2" y="607.6" font-size="12.5" font-style="italic" fill="#e6e6e6" font-family="Liberation Serif" textLength="10.8" lengthAdjust="spacingAndGlyphs">fx</text>
<path d="M474.4 609.2 H477.4 L475.9 611Z" fill="#e0e0e0"/>
<!-- mask -->
<rect x="487.8" y="598.8" width="12.2" height="8.6" rx="0.6" fill="#e2e2e2"/>
<circle cx="493.9" cy="603.1" r="2.7" fill="#4a4a4a"/>
<!-- adjustment -->
<circle cx="518.6" cy="603.3" r="4.7" fill="none" stroke="#dcdcdc" stroke-width="1.1"/>
<path d="M515.28 606.62 A4.7 4.7 0 0 0 521.92 599.98Z" fill="#dcdcdc"/>
<path d="M523 609.2 H526 L524.5 611Z" fill="#e0e0e0"/>
<!-- folder -->
<path d="M536.8 599.2 Q536.8 598.4 537.6 598.4 H541 L542 599.8 H547.6 Q548.4 599.8 548.4 600.6 V607.2 Q548.4 608 547.6 608 H537.6 Q536.8 608 536.8 607.2Z" fill="#dedede"/>
<rect x="537.4" y="600.6" width="10.4" height="0.9" fill="#555"/>
<!-- new layer -->
<path d="M561.6 599 H571 V608 H565.6 L561.6 604.6Z" fill="none" stroke="#dedede" stroke-width="1.2" stroke-linejoin="round"/>
<path d="M562 604.2 H566 V608" fill="none" stroke="#dedede" stroke-width="1.1"/>
<!-- trash -->
<g fill="none" stroke="#dedede" stroke-width="1.1">
<path d="M586.2 600.4 H595 M587 600.6 L587.4 608.8 H593.8 L594.2 600.6 M588.8 600.2 V598.6 H592.4 V600.2"/>
<path d="M589.2 602 V607.6 M590.6 602 V607.6 M592 602 V607.6" stroke-width="0.9"/>
</g>
<!-- grip -->
<path d="M505 618.4 H525" stroke="#555" stroke-width="2" stroke-dasharray="1 1"/>

</g>
</svg>
</body></html>
